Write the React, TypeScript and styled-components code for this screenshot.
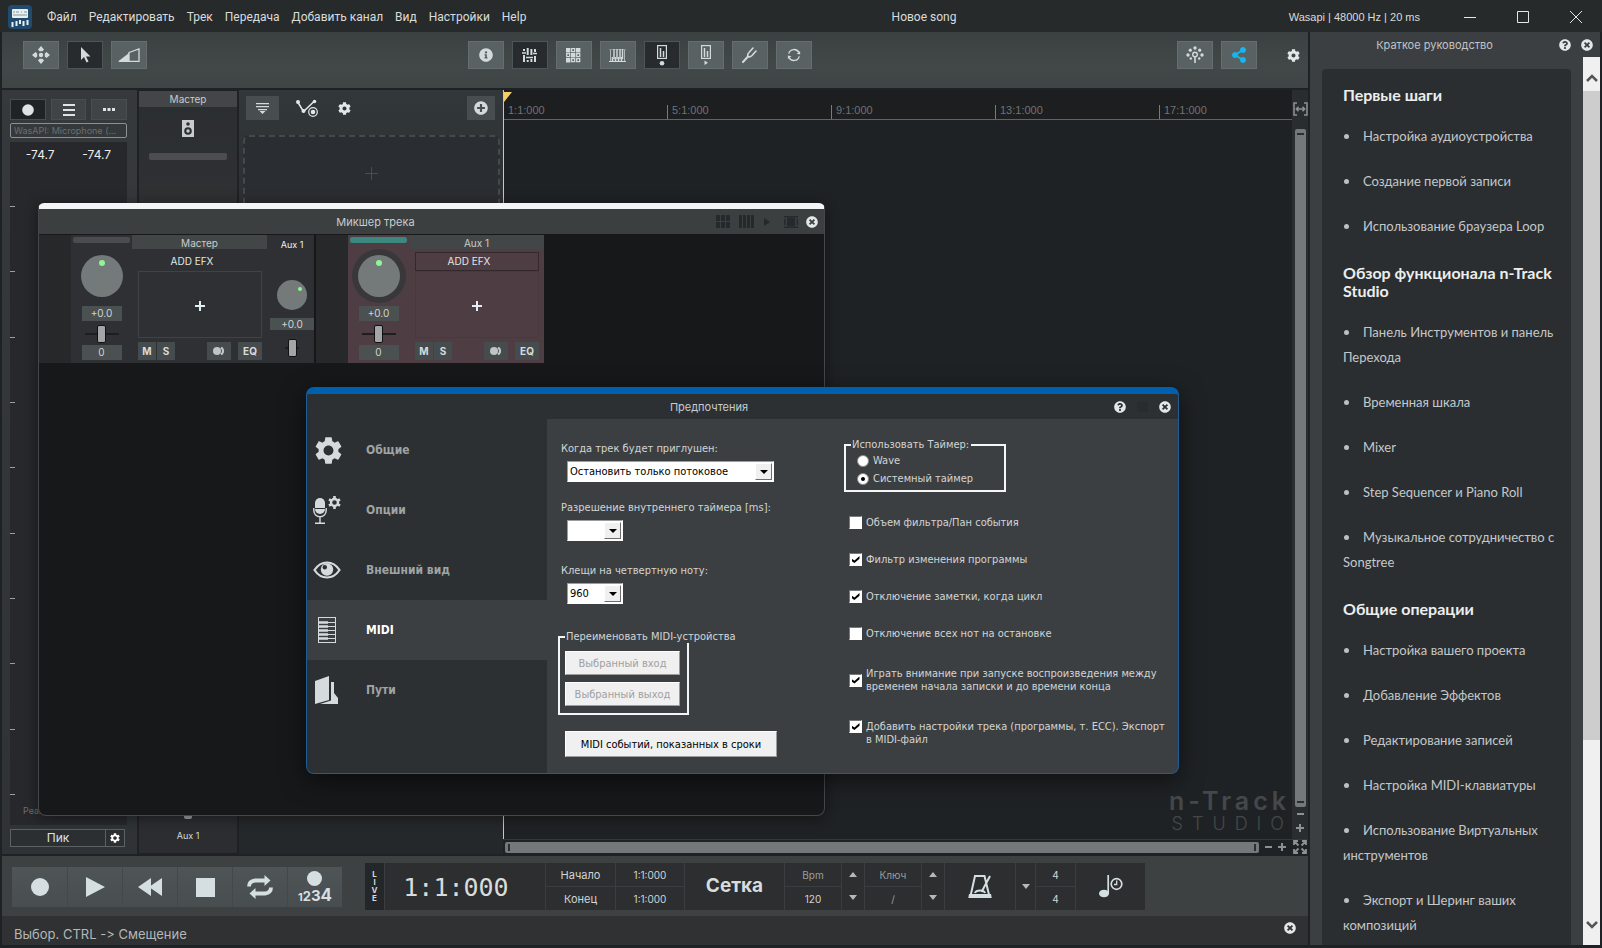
import React from 'react';
import styled, { createGlobalStyle, css } from 'styled-components';
import {
  FaCog, FaInfoCircle, FaQuestionCircle, FaTimesCircle, FaPlusCircle, FaShareAlt,
} from 'react-icons/fa';
import { MdSettings } from 'react-icons/md';

const ui = 'Roboto, "Noto Sans", sans-serif';
const geo = 'Inter, "Noto Sans", sans-serif';
const tahoma = '"DejaVu Sans Condensed", "DejaVu Sans", sans-serif';
const guideFont = 'Lato, Roboto, sans-serif';

const GlobalStyle = createGlobalStyle`
  *, *::before, *::after { box-sizing: border-box; }
  body { margin: 0; background: #1f2224; color: #d6dada; font: 11px/14px ${geo}; overflow: hidden; }
  button, input, select { font: inherit; color: inherit; margin: 0; padding: 0; border: 0; background: none; border-radius: 0; }
  svg { display: block; flex: none; }
  fieldset { margin: 0; min-width: 0; }
  h1, h2, h3, ul { margin: 0; padding: 0; font-weight: inherit; font-size: inherit; }
`;

const Window = styled.div`
  position: relative;
  display: flex;
  flex-direction: column;
  height: 100vh;
  padding: 0 2px 3px;
  background: #1f2224;
`;

/* ---------- title bar ---------- */
const TitleBar = styled.header`
  display: grid;
  grid-template-columns: 1.4fr auto 1fr;
  align-items: center;
  height: 32px;
  flex: none;
  padding: 1px 13px 0 6px;
  margin: 0 -2px;
  background: #262a2b;
  font: 12px/16px ${ui};
  color: #d9dcdc;
`;
const MenuBar = styled.nav`
  display: flex;
  align-items: center;
  gap: 12px;
  padding-left: 2px;
`;
const MenuButton = styled.button`
  white-space: nowrap;
`;
const LogoBox = styled.span`
  margin-right: 3px;
`;
const AppTitle = styled.h1``;
const TitleRight = styled.div`
  display: flex;
  align-items: center;
  justify-content: flex-end;
  font: 11px/16px "Liberation Sans", sans-serif;
`;
const AudioInfo = styled.span`
  margin-right: 37px;
`;
const WindowButton = styled.button`
  display: grid;
  place-items: center;
  width: 26px;
  height: 28px;
  & + & { margin-left: 27px; }
`;

/* ---------- frame ---------- */
const Columns = styled.div`
  display: flex;
  flex: 1;
  min-height: 0;
  gap: 2px;
`;
const Main = styled.main`
  display: flex;
  flex-direction: column;
  flex: 1;
  min-width: 0;
`;
const Toolbar = styled.div`
  display: grid;
  grid-template-columns: 0.91fr auto 1fr;
  align-items: start;
  height: 56px;
  flex: none;
  padding: 9px 8px 0 21px;
  background: linear-gradient(#3b4040, #424848 60%, #3f4444);
`;
const ToolGroup = styled.div<{ $end?: boolean }>`
  display: flex;
  align-items: center;
  gap: 8px;
  justify-content: ${(p) => (p.$end ? 'flex-end' : 'flex-start')};
`;
const ToolButton = styled.button<{ $active?: boolean }>`
  display: grid;
  place-items: center;
  width: 36px;
  height: 28px;
  color: #d3dadc;
  background: ${(p) => (p.$active ? '#272b2d' : '#5a6163')};
  border: 1px solid ${(p) => (p.$active ? '#4e5557' : '#666d6f')};
`;
const PlainButton = styled.button<{ $left?: number }>`
  display: grid;
  place-items: center;
  color: #e3e7e7;
  margin-left: ${(p) => p.$left ?? 0}px;
`;

/* ---------- workspace ---------- */
const Workspace = styled.div`
  display: flex;
  flex: 1;
  min-height: 0;
  margin: 2px 0;
  background: #1f2224;
`;
const InputPanel = styled.section`
  display: flex;
  flex-direction: column;
  width: 135px;
  flex: none;
  padding: 9px 10px 7px 8px;
  background: linear-gradient(#35393b, #2f3335);
`;
const ButtonRow = styled.div`
  display: flex;
  gap: 5px;
`;
const SmallButton = styled.button<{ $active?: boolean }>`
  display: grid;
  place-items: center;
  flex: 1;
  height: 21px;
  color: #dfe3e3;
  background: ${(p) => (p.$active ? '#202326' : '#404446')};
  border: 1px solid #484d4f;
`;
const DeviceName = styled.button`
  height: 15px;
  margin: 3px 0 4px;
  padding: 0 3px;
  border: 1px solid #8c9092;
  border-radius: 2px;
  color: #6b6f71;
  font-size: 9px;
  line-height: 12px;
  text-align: left;
  white-space: nowrap;
`;
const Meter = styled.div`
  display: flex;
  flex-direction: column;
  flex: 1;
  background: #26282b;
`;
const MeterValues = styled.div`
  display: flex;
  justify-content: space-around;
  padding: 5px 2px 0;
  height: 64px;
  font-size: 12px;
  line-height: 16px;
  color: #eceeee;
`;
const MeterTicks = styled.div`
  display: flex;
  flex-direction: column;
  justify-content: space-between;
  flex: 1;
  min-height: 0;
`;
const MeterTick = styled.i`
  width: 5px;
  height: 1px;
  background: #9a9e9f;
`;
const PeakLabel = styled.div`
  padding: 10px 0 8px 13px;
  font-size: 9px;
  line-height: 12px;
  color: #6b6f71;
`;
const PeakRow = styled.div`
  display: flex;
  height: 18px;
  margin: 4px 2px 0 0;
  border: 1px solid #5c6163;
  background: #2c2f31;
`;
const PeakButton = styled.button`
  flex: 1;
  font-size: 12px;
  line-height: 14px;
  color: #dfe3e3;
`;
const PeakGear = styled.button`
  display: grid;
  place-items: center;
  width: 19px;
  border-left: 1px solid #5c6163;
  color: #fff;
`;
const ChannelColumn = styled.section`
  display: flex;
  flex-direction: column;
  align-items: center;
  width: 98px;
  flex: none;
  margin: 1px 2px;
  background: linear-gradient(#2b2e30, #323336 30%, #2c2d31);
`;
const ChannelHeader = styled.h2`
  align-self: stretch;
  height: 16px;
  line-height: 17px;
  font-size: 10px;
  text-align: center;
  background: #434546;
  color: #c9cccc;
`;
const SpeakerButton = styled.button`
  margin: 13px 0 16px;
`;
const LevelBar = styled.div`
  width: 78px;
  height: 7px;
  border-radius: 2px;
  background: #4c4d50;
`;
const ChannelFoot = styled.div`
  display: flex;
  flex-direction: column;
  align-items: center;
  gap: 10px;
  margin-top: auto;
  padding-bottom: 10px;
  font-size: 9px;
`;
const FaderTip = styled.i`
  width: 8px;
  height: 8px;
  border-radius: 2px;
  background: #9fa2a3;
`;
const TrackPanel = styled.section`
  width: 264px;
  flex: none;
  display: flex;
  flex-direction: column;
  padding: 6px 3px 0 4px;
  background: linear-gradient(#32373a, #2a2e30 20%, #25282a);
`;
const TrackTools = styled.div`
  display: flex;
  align-items: center;
  padding: 0 5px 0 3px;
  color: #d3dadc;
`;
const TrackButton = styled.button<{ $w: number }>`
  display: grid;
  place-items: center;
  width: ${(p) => p.$w}px;
  height: 24px;
  background: #484d4f;
  color: #d3dadc;
`;
const Grow = styled.div`
  flex: 1;
`;
const DropZone = styled.div`
  display: grid;
  place-items: center;
  height: 74px;
  margin-top: 15px;
  border: 2px dashed #45494d;
  border-bottom: 0;
  border-radius: 6px 6px 0 0;
  background: #2a2d31;
  color: #4a4e52;
`;

/* ---------- timeline ---------- */
const Timeline = styled.section`
  display: flex;
  flex-direction: column;
  flex: 1;
  min-width: 0;
`;
const TimelineBody = styled.div`
  display: flex;
  flex: 1;
  min-height: 0;
`;
const Arrange = styled.div`
  display: flex;
  flex-direction: column;
  flex: 1;
  min-width: 0;
  border-left: 1px solid #f1c65c;
`;
const Ruler = styled.div`
  position: relative;
  display: flex;
  align-items: flex-end;
  height: 30px;
  flex: none;
  border-bottom: 1px solid #606466;
  background: #1c1e20;
  overflow: hidden;
`;
const RulerMark = styled.div<{ $first?: boolean }>`
  width: 164px;
  flex: none;
  height: 14px;
  padding-left: 4px;
  border-left: 1px solid ${(p) => (p.$first ? 'transparent' : '#777b7d')};
  margin-left: ${(p) => (p.$first ? -1 : 0)}px;
  font: 11px/10px "Liberation Sans", sans-serif;
  color: #6f7375;
`;
const PlayheadFlag = styled.i`
  position: absolute;
  left: 0;
  top: 2px;
  border-top: 10px solid #f5cf67;
  border-right: 8px solid transparent;
`;
const Logo = styled.div`
  display: flex;
  flex-direction: column;
  align-items: flex-end;
  margin-top: auto;
  padding: 0 4px 6px 0;
  color: #44484b;
`;
const LogoName = styled.div`
  font: 600 25px/28px ${geo};
  letter-spacing: 4px;
  margin-right: -2px;
`;
const LogoSub = styled.div`
  font: 300 18px/18px ${geo};
  letter-spacing: 9px;
  margin-right: -5px;
`;
const VStrip = styled.div`
  display: flex;
  flex-direction: column;
  align-items: center;
  width: 16px;
  flex: none;
  padding-top: 12px;
  background: #2a2d2f;
  color: #8d9193;
`;
const VThumb = styled.div`
  display: flex;
  flex-direction: column;
  justify-content: space-between;
  align-items: center;
  flex: 1;
  width: 11px;
  margin-top: 13px;
  padding: 4px 0;
  border-radius: 2px;
  background: #74787a;
  &::before, &::after { content: ''; width: 7px; height: 2px; background: #2c2f31; }
`;
const ZoomButton = styled.button`
  display: grid;
  place-items: center;
  width: 14px;
  height: 14px;
  color: #8d9193;
`;
const VZoom = styled.div`
  padding-bottom: 4px;
`;
const HStrip = styled.div`
  display: flex;
  align-items: center;
  height: 15px;
  flex: none;
  padding-left: 2px;
  background: #1f2224;
  border-top: 1px solid #34383a;
`;
const HThumb = styled.div`
  display: flex;
  justify-content: space-between;
  align-items: center;
  flex: 1;
  height: 11px;
  margin-right: 2px;
  padding: 0 3px;
  border-radius: 2px;
  background: #74787a;
  &::before, &::after { content: ''; width: 2px; height: 7px; background: #2c2f31; }
`;

/* ---------- transport ---------- */
const Transport = styled.section`
  display: flex;
  align-items: center;
  height: 60px;
  flex: none;
  padding: 0 10px;
  background: #3d4142;
`;
const TransportButtons = styled.div`
  display: flex;
  height: 40px;
  margin: 2px 23px 0 0;
  background: linear-gradient(#4f5557, #484e50);
`;
const TransportButton = styled.button`
  display: grid;
  place-items: center;
  width: 55px;
  color: #d5dfe2;
  & + & { border-left: 1px solid #434849; }
`;
const CountIn = styled.span`
  display: flex;
  flex-direction: column;
  align-items: center;
  gap: 2px;
  font: 700 14px/14px ${geo};
`;
const Digits = styled.span`
  display: flex;
  align-items: baseline;
`;
const Digit = styled.span<{ $size: number }>`
  font-size: ${(p) => p.$size}px;
`;
const Panel = styled.div`
  display: flex;
  height: 47px;
  background: #2c2e30;
`;
const Cell = styled.div<{ $w: number }>`
  display: flex;
  flex-direction: column;
  width: ${(p) => p.$w}px;
  border-right: 1px solid #3a3e40;
  &:last-child { border-right: 0; }
`;
const CellHalf = styled.div<{ $dim?: boolean; $size?: number }>`
  display: grid;
  place-items: center;
  flex: 1;
  padding-top: 2px;
  font-size: ${(p) => p.$size ?? 11}px;
  color: ${(p) => (p.$dim ? '#9a9e9f' : '#d2d5d5')};
  & + & { border-top: 1px solid #3a3e40; }
`;
const LiveButton = styled.button`
  display: flex;
  flex-direction: column;
  justify-content: center;
  align-items: center;
  flex: 1;
  font: 700 8px/8px ${geo};
  background: #242729;
`;
const Clock = styled.div`
  display: grid;
  place-items: center;
  flex: 1;
  padding: 3px 18px 0 0;
  font: 25px/28px "DejaVu Sans Mono", monospace;
  color: #d9dcdc;
`;
const GridButton = styled.button`
  flex: 1;
  font: 700 19px/24px ${geo};
  color: #d9dcdc;
`;
const CellButton = styled.button`
  display: grid;
  place-items: center;
  flex: 1;
  color: #d5dfe2;
`;
const Arrow = styled.i<{ $up?: boolean }>`
  border: 4px solid transparent;
  ${(p) => (p.$up
    ? css`border-top: 0; border-bottom: 5px solid #b4b8b9;`
    : css`border-bottom: 0; border-top: 5px solid #b4b8b9;`)}
`;
const StatusBar = styled.footer`
  display: flex;
  align-items: center;
  justify-content: space-between;
  height: 29px;
  flex: none;
  padding: 6px 12px 0 12px;
  background: #2f3132;
  font: 13px/18px ${geo};
  font-variant-ligatures: none;
  color: #b4b8b9;
`;

/* ---------- guide ---------- */
const Guide = styled.aside`
  display: flex;
  flex-direction: column;
  width: 290px;
  flex: none;
  background: #3c3f41;
`;
const GuideHeader = styled.div`
  display: grid;
  grid-template-columns: 1fr auto auto;
  align-items: center;
  gap: 10px;
  height: 25px;
  flex: none;
  padding: 0 7px 0 0;
  color: #e3e7e7;
`;
const GuideTitle = styled.h2`
  padding-left: 10px;
  text-align: center;
  color: #c0c4c4;
`;
const GuideBody = styled.div`
  display: flex;
  flex: 1;
  min-height: 0;
`;
const GuideCard = styled.div`
  flex: 1;
  min-width: 0;
  margin: 12px 12px 0;
  padding: 17px 14px 0 21px;
  border-radius: 4px 4px 0 0;
  background: #2b2e31;
  overflow: hidden;
  font-family: ${guideFont};
`;
const GuideHeading = styled.h3`
  font-size: 16px;
  line-height: 18px;
  font-weight: 700;
  color: #eceeee;
`;
const GuideList = styled.ul`
  display: flex;
  flex-direction: column;
  gap: 20px;
  padding: 20px 0 25px;
  list-style: none;
`;
const GuideItem = styled.li`
  font-size: 13px;
  line-height: 25px;
  color: #c4c8c9;
  &::before { content: ''; display: inline-block; width: 5px; height: 5px; margin: 0 14px 2px 1px; border-radius: 50%; background: #bcc0c1; }
`;
const GuideLink = styled.a`
  color: inherit;
  text-decoration: none;
`;
const GuideScroll = styled.div`
  display: flex;
  flex-direction: column;
  align-items: center;
  width: 17px;
  background: #f0f0f0;
  color: #555;
`;
const ScrollArrow = styled.button<{ $h: number }>`
  display: grid;
  place-items: center;
  width: 17px;
  height: ${(p) => p.$h}px;
  padding-top: 8px;
  color: #555;
`;
const ScrollThumb = styled.div`
  width: 17px;
  flex: 650;
  background: #cdcdcd;
`;
const ScrollRest = styled.div`
  flex: 157;
`;

/* ---------- mixer window ---------- */
const MixerWindow = styled.section`
  position: absolute;
  left: 38px;
  top: 203px;
  width: 787px;
  height: 613px;
  display: flex;
  flex-direction: column;
  border: 1px solid #44484a;
  border-top: 6px solid #f4f6f6;
  border-radius: 6px 6px 8px 8px;
  background: #17181a;
  box-shadow: 0 2px 14px rgba(0, 0, 0, 0.45);
  overflow: hidden;
`;
const MixerHeader = styled.div`
  display: flex;
  align-items: center;
  height: 26px;
  padding: 0 6px 0 0;
  flex: none;
  border-bottom: 1px solid #17181a;
  background: #3b3f40;
  color: #26292b;
`;
const FloatTitle = styled.h2`
  flex: 1;
  text-align: center;
  color: #c9cccc;
`;
const MixerTitle = styled(FloatTitle)`
  padding-right: 4px;
`;
const Strips = styled.div`
  display: flex;
  gap: 1px;
`;
const Strip = styled.div<{ $tint?: boolean }>`
  display: flex;
  height: 128px;
  background: ${(p) => (p.$tint ? '#4e3d43' : '#2e3033')};
`;
const StripGutter = styled.div`
  width: 32px;
  background: #26282a;
`;
const KnobColumn = styled.div`
  display: flex;
  flex-direction: column;
  align-items: center;
  width: 61px;
  padding-top: 2px;
`;
const StripBar = styled.div<{ $teal?: boolean }>`
  width: 57px;
  height: 6px;
  margin-bottom: 12px;
  border-radius: 2px;
  background: ${(p) => (p.$teal ? '#3a8880' : '#4a4c4e')};
`;
const KnobRing = styled.div<{ $ring?: boolean }>`
  border-radius: 50%;
  box-shadow: ${(p) => (p.$ring ? '0 0 0 6px #38383b' : 'none')};
`;
const ValueBox = styled.output<{ $w: number; $h: number }>`
  display: block;
  width: ${(p) => p.$w}px;
  height: ${(p) => p.$h}px;
  line-height: ${(p) => p.$h}px;
  text-align: center;
  background: #4b5051;
  color: #d2d5d5;
  font-size: 10px;
`;
const PanSliderRow = styled.div`
  display: flex;
  padding: 4px 0 2px;
`;
const PanSlider = styled.input<{ $w: number }>`
  appearance: none;
  width: ${(p) => p.$w}px;
  height: 18px;
  background: linear-gradient(#1c1e20, #1c1e20) center / 100% 2px no-repeat;
  &::-webkit-slider-thumb {
    appearance: none;
    width: 9px;
    height: 18px;
    border: 1px solid #111;
    border-radius: 2px;
    background: #a3a6a7;
  }
`;
const KnobStack = styled.div`
  display: flex;
  flex-direction: column;
  align-items: center;
  padding-top: 9px;
`;
const EfxColumn = styled.div`
  display: flex;
  flex-direction: column;
  width: 135px;
`;
const EfxHeader = styled.h3`
  height: 14px;
  line-height: 16px;
  font-size: 10px;
  text-align: center;
  background: #434647;
  color: #c9cccc;
`;
const EfxBody = styled.div`
  display: flex;
  flex-direction: column;
  padding: 3px 5px 0 6px;
`;
const AddEfx = styled.button<{ $tint?: boolean }>`
  height: 19px;
  padding: 0 16px 2px 0;
  border: 1px solid ${(p) => (p.$tint ? '#33292d' : 'transparent')};
  color: #e3e7e7;
  font-size: 10px;
`;
const SlotButton = styled.button<{ $tint?: boolean }>`
  display: grid;
  place-items: center;
  height: 67px;
  padding-top: 2px;
  border: 1px solid ${(p) => (p.$tint ? '#49383e' : '#404345')};
  color: #dfeff3;
`;
const StripButtons = styled.div`
  display: flex;
  gap: 1px;
  margin-top: 4px;
`;
const StripButton = styled.button<{ $w: number; $left?: number }>`
  display: grid;
  place-items: center;
  width: ${(p) => p.$w}px;
  height: 18px;
  margin-left: ${(p) => p.$left ?? 0}px;
  background: #464b4d;
  color: #d9dcdc;
  font-weight: 700;
  font-size: 10px;
`;
const AuxColumn = styled.div`
  display: flex;
  flex-direction: column;
  align-items: center;
  width: 48px;
  padding: 3px 0 0 3px;
  border-right: 1px solid #141516;
`;
const AuxLabel = styled.div`
  margin-bottom: 28px;
  font-size: 9px;
  color: #f0f2f2;
`;
const AuxValue = styled(ValueBox)`
  margin: 8px 0 9px;
`;
const HeaderIcons = styled.div`
  display: flex;
  align-items: center;
  gap: 8px;
`;

/* ---------- preferences window ---------- */
const PrefsWindow = styled.section`
  position: absolute;
  left: 306px;
  top: 387px;
  width: 873px;
  height: 387px;
  display: flex;
  flex-direction: column;
  border: 1px solid #1d5e99;
  border-top: 7px solid #0060b0;
  border-radius: 8px;
  background: #3c3f41;
  box-shadow: 0 6px 24px rgba(0, 0, 0, 0.55);
  overflow: hidden;
`;
const PrefsHeader = styled.div`
  display: flex;
  align-items: center;
  gap: 11px;
  height: 25px;
  flex: none;
  padding: 0 7px 0 0;
  background: #2c3033;
  color: #282c2f;
`;
const PrefsTitle = styled(FloatTitle)`
  padding-left: 8px;
`;
const PrefsBody = styled.div`
  display: flex;
  flex: 1;
  font: 11px/13px ${tahoma};
  color: #d2d5d5;
`;
const SideNav = styled.nav`
  width: 240px;
  padding-top: 1px;
  background: #2c3033;
`;
const SideItem = styled.button<{ $active?: boolean }>`
  display: flex;
  align-items: center;
  width: 100%;
  height: 60px;
  padding-left: 5px;
  background: ${(p) => (p.$active ? '#3c3f41' : 'transparent')};
  color: ${(p) => (p.$active ? '#fff' : '#9fa3a4')};
  font-weight: 700;
  font-size: 12px;
`;
const SideIcon = styled.span`
  display: grid;
  place-items: center;
  width: 30px;
  margin-right: 24px;
  color: #d5dadd;
`;
const Form = styled.form`
  display: flex;
  flex: 1;
  align-items: flex-start;
`;
const FormColumn = styled.div<{ $w: number; $top: number }>`
  display: flex;
  flex-direction: column;
  align-items: flex-start;
  width: ${(p) => p.$w}px;
  padding-top: ${(p) => p.$top}px;
`;
const Field = styled.div<{ $gap: number }>`
  display: flex;
  flex-direction: column;
  gap: 6px;
  padding-left: 14px;
  margin-bottom: ${(p) => p.$gap}px;
`;
const FieldLabel = styled.label`
  white-space: nowrap;
`;
const SelectBox = styled.div<{ $w: number }>`
  position: relative;
  width: ${(p) => p.$w}px;
  height: 21px;
  margin-left: 6px;
`;
const Select = styled.select`
  appearance: none;
  width: 100%;
  height: 100%;
  padding: 0 20px 0 2px;
  border: 1px solid;
  border-color: #9a9c9d #fff #fff #9a9c9d;
  background: #fff;
  color: #000;
`;
const SelectArrow = styled.span`
  position: absolute;
  top: 2px;
  right: 2px;
  bottom: 2px;
  display: grid;
  place-items: center;
  width: 17px;
  border: 1px solid;
  border-color: #fff #6d6d6d #6d6d6d #fff;
  background: #f0f0f0;
  pointer-events: none;
  &::after { content: ''; border: 4px solid transparent; border-top-color: #000; border-bottom: 0; }
`;
const Group = styled.fieldset<{ $w: number }>`
  display: flex;
  flex-direction: column;
  width: ${(p) => p.$w}px;
  padding: 0 5px;
  border: 2px solid #f4f6f6;
  & > legend { padding: 0 2px 0 1px; white-space: nowrap; }
`;
const DeviceGroup = styled(Group)`
  margin-left: 11px;
`;
const GroupBody = styled.div<{ $gap: number; $pad: string }>`
  display: flex;
  flex-direction: column;
  gap: ${(p) => p.$gap}px;
  padding: ${(p) => p.$pad};
`;
const ClassicButton = styled.button<{ $w: number; $h: number }>`
  width: ${(p) => p.$w}px;
  height: ${(p) => p.$h}px;
  border: 1px solid;
  border-color: #fff #9a9c9d #9a9c9d #fff;
  background: #f0f0f0;
  color: #000;
  white-space: nowrap;
  &:disabled { color: #a0a0a0; }
`;
const WideButtonRow = styled.div`
  padding: 16px 0 0 18px;
`;
const Choice = styled.label<{ $first?: boolean; $top?: number }>`
  display: flex;
  align-items: ${(p) => (p.$first ? 'flex-start' : 'center')};
  gap: 4px;
  padding-top: ${(p) => p.$top ?? 0}px;
`;
const Radio = styled.input`
  appearance: none;
  display: grid;
  place-items: center;
  width: 12px;
  height: 12px;
  border: 1px solid #8a8c8d;
  border-radius: 50%;
  background: #fff;
  &:checked::after { content: ''; width: 4px; height: 4px; border-radius: 50%; background: #000; }
`;
const Check = styled.input`
  appearance: none;
  display: grid;
  place-items: center;
  flex: none;
  width: 13px;
  height: 13px;
  border: 1px solid;
  border-color: #77797a #fff #fff #77797a;
  background: #fff;
  &:checked::after {
    content: '';
    width: 8px;
    height: 7px;
    background: #000;
    clip-path: polygon(0 35%, 37% 65%, 100% 0, 100% 40%, 37% 100%, 0 70%);
  }
`;
const CheckList = styled.div`
  display: flex;
  flex-direction: column;
  gap: 24px;
  padding: 24px 0 0 5px;
`;
const OptionText = styled.span`
  white-space: pre;
`;
const FullButton = styled(ZoomButton)`
  width: 16px;
  margin-left: 3px;
`;
const StatusClose = styled(PlainButton)`
  margin-bottom: 12px;
`;

/* ---------- drawings ---------- */
const AppLogo = () => (
  <svg width="24" height="24" viewBox="0 0 24 24">
    <rect width="24" height="24" rx="4" fill="#1f4c6e" />
    <rect x="4" y="4" width="16" height="9" rx="1" fill="#e9eef0" />
    <path d="M5 7h2m1 0h3m2 0h1m2 0h3M5 10h14" stroke="#8a9499" strokeWidth="1" />
    <path d="M4.500 17v5M8.500 16v5M12 15v4M15.500 16v5M19.500 15v5" stroke="#e9eef0" strokeWidth="2" />
  </svg>
);
const MoveIcon = () => (
  <svg width="18" height="18" viewBox="0 0 18 18" fill="currentColor">
    <path d="M9 0l3 3.500-1.500 1.700h-3L6 3.500zM9 18l3-3.500-1.500-1.700h-3L6 14.500zM0 9l3.500-3 1.700 1.500v3L3.500 12zM18 9l-3.500-3-1.700 1.500v3l1.700 1.500z" />
    <circle cx="9" cy="9" r="2.200" />
  </svg>
);
const CursorIcon = () => (
  <svg width="11" height="16" viewBox="0 0 11 16" fill="currentColor">
    <path d="M1 0v13l3-3 2.500 5.500 2-1L6 9.500h4.500z" />
  </svg>
);
const FadeIcon = () => (
  <svg width="22" height="14" viewBox="0 0 22 14" fill="none" stroke="currentColor">
    <path d="M0 13.500L11 5v8.500z" fill="currentColor" stroke="none" />
    <path d="M11 4.500L21 1v12.500H1M11 4v9" strokeWidth="1.300" />
  </svg>
);
const MixerIcon = () => (
  <svg width="15" height="14" viewBox="0 0 15 14" stroke="currentColor" strokeWidth="2">
    <path d="M2 1v2M2 7v7M5.700 0v7M5.700 12v2M9.400 1v6M9.400 11v3M13 1v3M13 8v6" />
    <path d="M0 5h4M4 9.500h4M8 9.500h3M11 5.500h4" strokeWidth="1.600" />
  </svg>
);
const StepIcon = () => (
  <svg width="15" height="15" viewBox="0 0 15 15" fill="none" stroke="currentColor" strokeWidth="1.300">
    <path d="M.7 5.700h3v3h-3zM5.700.7h3v3h-3zM10.700 5.700h3v3h-3zM10.700 10.700h3v3h-3zM5.700 10.700h3v3h-3z" />
    <path d="M0 0h4.400v4.400H0zM10 0h4.400v4.400H10zM5 5h4.400v4.400H5zM0 10h4.400v4.400H0z" fill="currentColor" stroke="none" />
  </svg>
);
const PianoIcon = () => (
  <svg width="17" height="13" viewBox="0 0 17 13" stroke="currentColor">
    <path d="M0 12.500h17" />
    <path d="M1.500 1v11M15.500 1v11" opacity=".7" />
    <path d="M5 0v10M8 0v10M11 0v10M13.500 0v10" strokeWidth="1.400" />
    <path d="M3.500 8v4M6.500 8v4M9.500 8v4M12.500 8v4" strokeWidth="1.600" />
    <path d="M0 .5h17" opacity=".4" />
  </svg>
);
const MeterIcon = ({ play }: { play?: boolean }) => (
  <svg width="10" height="21" viewBox="0 0 10 21" fill="none" stroke="currentColor">
    <rect x=".6" y=".6" width="8.800" height="12.800" strokeWidth="1.200" />
    <path d="M3.500 3v9M6.500 6v6" strokeWidth="1.500" />
    {play ? <path d="M3.500 15.500l3.500 2.200-3.500 2.300z" fill="currentColor" stroke="none" />
      : <circle cx="5" cy="18.200" r="2.300" fill="currentColor" stroke="none" />}
  </svg>
);
const ForkIcon = () => (
  <svg width="15" height="16" viewBox="0 0 15 16" fill="none" stroke="currentColor" strokeWidth="1.600" strokeLinecap="round">
    <path d="M1 15l5-5.500" strokeWidth="2" />
    <path d="M6 9.500c-1-2 0-3 1-4L11 1M6 9.500c2 1 3 0 4-1L14 4" />
  </svg>
);
const SyncIcon = () => (
  <svg width="14" height="14" viewBox="0 0 16 16" fill="none" stroke="currentColor" strokeWidth="1.500">
    <path d="M2 6.500A6.200 6.200 0 0 1 13.500 5M14 9.500A6.200 6.200 0 0 1 2.500 11" />
    <path d="M15 3.500V7.500l-4-1zM1 12.500V8.500l4 1z" fill="currentColor" stroke="none" />
  </svg>
);
const TreeIcon = () => (
  <svg width="18" height="18" viewBox="0 0 18 18" fill="currentColor">
    <circle cx="9" cy="8.500" r="2.300" fill="none" stroke="currentColor" strokeWidth="1.400" />
    <path d="M8.200 11h1.600v6H8.200z" />
    <circle cx="9" cy="2" r="1.700" /><circle cx="4.300" cy="4.200" r="1.600" /><circle cx="13.700" cy="4.200" r="1.600" />
    <circle cx="2" cy="9" r="1.700" /><circle cx="16" cy="9" r="1.700" />
    <circle cx="4.800" cy="12.500" r="1.200" /><circle cx="13.200" cy="12.500" r="1.200" />
  </svg>
);
const SpeakerIcon = () => (
  <svg width="12" height="17" viewBox="0 0 12 17">
    <rect width="12" height="17" fill="#c7cbcc" />
    <circle cx="6" cy="4" r="1.800" fill="#2b2e30" />
    <circle cx="6" cy="11" r="3.800" fill="#2b2e30" />
    <circle cx="6" cy="11" r="1.700" fill="#c7cbcc" />
  </svg>
);
const ListDownIcon = () => (
  <svg width="13" height="11" viewBox="0 0 13 11" fill="currentColor">
    <path d="M0 0h13v1.300H0zM0 3h13v1.300H0zM2 6h9v1.300H2zM3.500 8h6l-3 3z" />
  </svg>
);
const EnvelopeIcon = () => (
  <svg width="23" height="18" viewBox="0 0 23 18" fill="none" stroke="currentColor">
    <path d="M2 3.500l5.500 9L18 2.500" strokeWidth="1.500" />
    <g fill="currentColor" stroke="none">
      <circle cx="2" cy="3" r="2" /><circle cx="7.500" cy="12" r="2" /><circle cx="18.500" cy="2.500" r="1.800" /><circle cx="17" cy="13" r="2.300" />
    </g>
    <circle cx="17" cy="13" r="4.300" strokeWidth="1.200" />
  </svg>
);
const Plus = ({ size, w = 1 }: { size: number; w?: number }) => (
  <svg width={size} height={size} viewBox={`0 0 ${size} ${size}`} stroke="currentColor" strokeWidth={w}>
    <path d={`M${size / 2} 0v${size}M0 ${size / 2}h${size}`} />
  </svg>
);
const Minus = () => (
  <svg width="7" height="2" viewBox="0 0 7 2" fill="currentColor"><path d="M0 0h7v2H0z" /></svg>
);
const FitIcon = () => (
  <svg width="15" height="14" viewBox="0 0 15 14" fill="none" stroke="currentColor" strokeWidth="1.500">
    <path d="M4 1H1v12h3M11 1h3v12h-3M3.500 7h8M5.500 4.800L3.300 7l2.200 2.200M9.500 4.800L11.700 7 9.500 9.200" />
  </svg>
);
const ExpandIcon = () => (
  <svg width="14" height="14" viewBox="0 0 14 14" fill="none" stroke="currentColor" strokeWidth="1.800">
    <path d="M5 1H1v4M9 1h4v4M5 13H1V9M9 13h4V9M1.500 1.500L5.500 5.500M12.500 1.500l-4 4M1.500 12.500l4-4M12.500 12.500l-4-4" />
  </svg>
);
const LoopIcon = () => (
  <svg width="26" height="26" viewBox="0 0 26 26" fill="none" stroke="currentColor" strokeWidth="3.800">
    <path d="M2 12.500C2 9 4.500 7 8 6.500H18M24 13.500c0 3.500-2.500 5.500-6 6H8" />
    <path d="M17.500 1l6 5.500-6 5.500zM8.500 14l-6 5.500 6 5.500z" fill="currentColor" stroke="none" />
  </svg>
);
const MetronomeIcon = () => (
  <svg width="24" height="25" viewBox="0 0 24 25" fill="none" stroke="currentColor" strokeWidth="2">
    <path d="M2.500 22L7 2h9.500l4.800 20M22 2l-8.500 16M7 19c1-3.500 9-3.500 10 0" />
    <path d="M1 20h22l.7 4H.3z" fill="currentColor" stroke="none" />
  </svg>
);
const NoteClockIcon = () => (
  <svg width="24" height="23" viewBox="0 0 24 23" fill="none" stroke="currentColor">
    <ellipse cx="5" cy="18.500" rx="5" ry="3.800" fill="currentColor" stroke="none" />
    <path d="M9.200 0v19" strokeWidth="1.700" />
    <circle cx="17.500" cy="9" r="5.300" strokeWidth="1.700" />
    <path d="M17.700 5.500V9.500H15" strokeWidth="1.300" />
  </svg>
);
const MicIcon = () => (
  <svg width="28" height="28" viewBox="0 0 28 28" fill="none" stroke="currentColor">
    <rect x="2" y="2" width="10" height="16" rx="5" fill="currentColor" stroke="none" />
    <path d="M.8 12v2.500a6.200 6.200 0 0 0 12.400 0V12M7 21v6M2 27.200h10" strokeWidth="1.400" />
    <path d="M2 12.500h10" stroke="#2c3033" />
    <circle cx="21.500" cy="6.500" r="3.500" strokeWidth="2.400" />
    <path d="M21.500 0v3M21.500 10v3M16 3.300l2.500 1.500M24.500 8.200l2.500 1.500M16 9.700l2.500-1.500M24.500 4.800L27 3.300" strokeWidth="2.600" />
  </svg>
);
const EyeIcon = () => (
  <svg width="28" height="18" viewBox="0 0 28 18">
    <path d="M1.500 9C8-1 20-1 26.500 9 20 19 8 19 1.500 9z" fill="none" stroke="currentColor" strokeWidth="2.200" />
    <circle cx="14" cy="8.500" r="6.200" fill="currentColor" />
    <circle cx="11.800" cy="6.200" r="2.200" fill="#2c3033" />
  </svg>
);
const KeysIcon = () => (
  <svg width="18" height="26" viewBox="0 0 18 26" stroke="currentColor" fill="none">
    <rect x=".5" y=".5" width="17" height="25" />
    <path d="M1 5.500h16M1 9.500h16M1 13.500h16M1 17.500h16M1 21.500h16" strokeWidth="1" />
    <path d="M1 5.500h9M1 9.500h9M1 13.500h9M1 17.500h9M1 21.500h9" strokeWidth="2.600" />
  </svg>
);
const FolderIcon = () => (
  <svg width="24" height="28" viewBox="0 0 24 28" fill="currentColor">
    <path d="M0 5L14 0v24L0 28z" />
    <path d="M16 6h3v11l4 5v6H5l11-3.500z" />
  </svg>
);
const Knob = ({ r, dot }: { r: number; dot: [number, number, number] }) => (
  <svg width={r * 2} height={r * 2} viewBox={`0 0 ${r * 2} ${r * 2}`}>
    <circle cx={r} cy={r} r={r} fill="#747979" />
    <circle cx={dot[0]} cy={dot[1]} r={dot[2]} fill="#8ff596" />
  </svg>
);
const PhaseIcon = () => (
  <svg width="12" height="8" viewBox="0 0 12 8">
    <circle cx="4" cy="4" r="4" fill="#c0c4c4" />
    <path d="M8 .5a4 4 0 0 1 0 7" fill="none" stroke="#c0c4c4" strokeWidth="2.200" />
  </svg>
);
const Chevron = ({ up }: { up?: boolean }) => (
  <svg width="12" height="8" viewBox="0 0 12 8" fill="none" stroke="currentColor" strokeWidth="2.500">
    <path d={up ? 'M1 7l5-5 5 5' : 'M1 1l5 5 5-5'} />
  </svg>
);
const FrameIcon = () => (
  <svg width="14" height="12" viewBox="0 0 14 12" fill="currentColor">
    <path d="M0 0h14v1.500H0zM0 10.500h14V12H0zM0 3h1.500v6H0zM12.500 3H14v6h-1.500zM3 2h8v8H3z" />
  </svg>
);

const menus = ['Файл', 'Редактировать', 'Трек', 'Передача', 'Добавить канал', 'Вид', 'Настройки', 'Help'];
const marks = ['1:1:000', '5:1:000', '9:1:000', '13:1:000', '17:1:000'];
const guide = [
  { title: 'Первые шаги', items: ['Настройка аудиоустройства', 'Создание первой записи', 'Использование браузера Loop'] },
  { title: 'Обзор функционала n-Track Studio', items: ['Панель Инструментов и панель Перехода', 'Временная шкала', 'Mixer', 'Step Sequencer и Piano Roll', 'Музыкальное сотрудничество с Songtree'] },
  { title: 'Общие операции', items: ['Настройка вашего проекта', 'Добавление Эффектов', 'Редактирование записей', 'Настройка MIDI-клавиатуры', 'Использование Виртуальных инструментов', 'Экспорт и Шеринг ваших композиций'] },
];
const sections = [
  { label: 'Общие', icon: <MdSettings size={33} /> },
  { label: 'Опции', icon: <MicIcon /> },
  { label: 'Внешний вид', icon: <EyeIcon /> },
  { label: 'MIDI', icon: <KeysIcon />, active: true },
  { label: 'Пути', icon: <FolderIcon /> },
];
const options: { text: string; on?: boolean; first?: boolean; top?: number }[] = [
  { text: 'Объем фильтра/Пан события' },
  { text: 'Фильтр изменения программы', on: true },
  { text: 'Отключение заметки, когда цикл', on: true },
  { text: 'Отключение всех нот на остановке' },
  { text: 'Играть внимание при запуске воспроизведения между\nвременем начала записки и до времени конца', on: true, top: 3 },
  { text: 'Добавить настройки трека (программы, т. ЕСС). Экспорт\nв MIDI-файл', on: true, first: true, top: 3 },
];

const ChannelStrip = ({ name, tint, aux }: { name: string; tint?: boolean; aux?: boolean }) => (
  <Strip $tint={tint}>
    <StripGutter />
    <KnobColumn>
      <StripBar $teal={tint} />
      <KnobRing $ring={tint}><Knob r={21} dot={[21, 8, 3]} /></KnobRing>
      <KnobStack>
        <ValueBox $w={40} $h={15}>+0.0</ValueBox>
        <PanSliderRow><PanSlider type="range" $w={34} aria-label={`${name} pan`} /></PanSliderRow>
        <ValueBox $w={40} $h={15}>0</ValueBox>
      </KnobStack>
    </KnobColumn>
    <EfxColumn>
      <EfxHeader>{name}</EfxHeader>
      <EfxBody>
        <AddEfx $tint={tint}>ADD EFX</AddEfx>
        <SlotButton $tint={tint} aria-label="Add effect"><Plus size={10} w={2} /></SlotButton>
        <StripButtons>
          <StripButton $w={18}>M</StripButton>
          <StripButton $w={18}>S</StripButton>
          <StripButton $w={24} $left={31} aria-label="Phase"><PhaseIcon /></StripButton>
          <StripButton $w={24} $left={6}>EQ</StripButton>
        </StripButtons>
      </EfxBody>
    </EfxColumn>
    {aux && (
      <AuxColumn>
        <AuxLabel>Aux 1</AuxLabel>
        <Knob r={15} dot={[23, 9, 2]} />
        <AuxValue $w={44} $h={12}>+0.0</AuxValue>
        <PanSlider type="range" $w={14} aria-label="Aux 1 pan" />
      </AuxColumn>
    )}
  </Strip>
);

const Mixer = () => (
  <MixerWindow>
    <MixerHeader>
      <MixerTitle>Микшер трека</MixerTitle>
      <HeaderIcons>
        <svg width="15" height="13" viewBox="0 0 15 13" fill="currentColor"><path d="M0 0h4v6H0zM5 0h4v6H5zM10 0h4v6h-4zM0 7h4v6H0zM5 7h4v6H5zM10 7h4v6h-4z" /></svg>
        <svg width="15" height="13" viewBox="0 0 15 13" fill="currentColor"><path d="M0 0h3v13H0zM4 0h3v13H4zM8 0h3v13H8zM12 0h3v13h-3z" /></svg>
        <svg width="14" height="10" viewBox="0 0 14 10" fill="currentColor"><path d="M2 1l6 4-6 4z" /></svg>
        <FrameIcon />
        <PlainButton aria-label="Close mixer"><FaTimesCircle size={12} /></PlainButton>
      </HeaderIcons>
    </MixerHeader>
    <Strips>
      <ChannelStrip name="Мастер" aux />
      <ChannelStrip name="Aux 1" tint />
    </Strips>
  </MixerWindow>
);

const Preferences = () => (
  <PrefsWindow>
    <PrefsHeader>
      <PrefsTitle>Предпочтения</PrefsTitle>
      <PlainButton aria-label="Help"><FaQuestionCircle size={12} /></PlainButton>
      <svg width="11" height="10" viewBox="0 0 11 10" fill="currentColor"><path d="M0 0h11v10H0z" /></svg>
      <PlainButton aria-label="Close preferences"><FaTimesCircle size={12} /></PlainButton>
    </PrefsHeader>
    <PrefsBody>
      <SideNav>
        {sections.map((s) => (
          <SideItem key={s.label} $active={s.active}><SideIcon>{s.icon}</SideIcon>{s.label}</SideItem>
        ))}
      </SideNav>
      <Form onSubmit={(e) => e.preventDefault()}>
        <FormColumn $w={297} $top={23}>
          <Field $gap={19}>
            <FieldLabel htmlFor="mute">Когда трек будет приглушен:</FieldLabel>
            <SelectBox $w={207}>
              <Select id="mute"><option>Остановить только потоковое</option></Select>
              <SelectArrow />
            </SelectBox>
          </Field>
          <Field $gap={23}>
            <FieldLabel htmlFor="timer">Разрешение внутреннего таймера [ms]:</FieldLabel>
            <SelectBox $w={56}>
              <Select id="timer"><option></option></Select>
              <SelectArrow />
            </SelectBox>
          </Field>
          <Field $gap={26}>
            <FieldLabel htmlFor="ticks">Клещи на четвертную ноту:</FieldLabel>
            <SelectBox $w={56}>
              <Select id="ticks"><option>960</option></Select>
              <SelectArrow />
            </SelectBox>
          </Field>
          <DeviceGroup $w={131}>
            <legend>Переименовать MIDI-устройства</legend>
            <GroupBody $gap={7} $pad="8px 0 7px">
              <ClassicButton $w={115} $h={24} disabled>Выбранный вход</ClassicButton>
              <ClassicButton $w={115} $h={24} disabled>Выбранный выход</ClassicButton>
            </GroupBody>
          </DeviceGroup>
          <WideButtonRow>
            <ClassicButton $w={212} $h={26}>MIDI событий, показанных в сроки</ClassicButton>
          </WideButtonRow>
        </FormColumn>
        <FormColumn $w={320} $top={19}>
          <Group $w={162}>
            <legend>Использовать Таймер:</legend>
            <GroupBody $gap={5} $pad="3px 0 5px 6px">
              <Choice><Radio type="radio" name="clock" />Wave</Choice>
              <Choice><Radio type="radio" name="clock" defaultChecked />Системный таймер</Choice>
            </GroupBody>
          </Group>
          <CheckList>
            {options.map((o) => (
              <Choice key={o.text} $first={o.first} $top={o.top}>
                <Check type="checkbox" defaultChecked={o.on} />
                <OptionText>{o.text}</OptionText>
              </Choice>
            ))}
          </CheckList>
        </FormColumn>
      </Form>
    </PrefsBody>
  </PrefsWindow>
);

const Stepper = ({ name }: { name: string }) => (
  <Cell $w={23}>
    <CellButton aria-label={`${name} up`}><Arrow $up /></CellButton>
    <CellButton aria-label={`${name} down`}><Arrow /></CellButton>
  </Cell>
);

export default function App() {
  return (
    <Window>
      <GlobalStyle />
      <TitleBar>
        <MenuBar>
          <LogoBox><AppLogo /></LogoBox>
          {menus.map((m) => <MenuButton key={m}>{m}</MenuButton>)}
        </MenuBar>
        <AppTitle>Новое song</AppTitle>
        <TitleRight>
          <AudioInfo>Wasapi | 48000 Hz | 20 ms</AudioInfo>
          <WindowButton aria-label="Minimize"><svg width="12" height="12" stroke="#e3e7e7"><path d="M0 6.500h12" /></svg></WindowButton>
          <WindowButton aria-label="Maximize"><svg width="12" height="12" stroke="#e3e7e7" fill="none"><path d="M.5.500h11v11H.5z" /></svg></WindowButton>
          <WindowButton aria-label="Close"><svg width="12" height="12" stroke="#e3e7e7"><path d="M0 0l12 12M12 0L0 12" /></svg></WindowButton>
        </TitleRight>
      </TitleBar>
      <Columns>
        <Main>
          <Toolbar>
            <ToolGroup>
              <ToolButton aria-label="Move"><MoveIcon /></ToolButton>
              <ToolButton $active aria-label="Select"><CursorIcon /></ToolButton>
              <ToolButton aria-label="Fade"><FadeIcon /></ToolButton>
            </ToolGroup>
            <ToolGroup>
              <ToolButton aria-label="Info"><FaInfoCircle size={14} /></ToolButton>
              <ToolButton $active aria-label="Mixer"><MixerIcon /></ToolButton>
              <ToolButton aria-label="Step sequencer"><StepIcon /></ToolButton>
              <ToolButton aria-label="Piano"><PianoIcon /></ToolButton>
              <ToolButton $active aria-label="Input meter"><MeterIcon /></ToolButton>
              <ToolButton aria-label="Output meter"><MeterIcon play /></ToolButton>
              <ToolButton aria-label="Tuner"><ForkIcon /></ToolButton>
              <ToolButton aria-label="Sync"><SyncIcon /></ToolButton>
            </ToolGroup>
            <ToolGroup $end>
              <ToolButton aria-label="Songtree"><TreeIcon /></ToolButton>
              <ToolButton aria-label="Share"><FaShareAlt size={16} color="#17b4ee" /></ToolButton>
              <PlainButton $left={22} aria-label="Settings"><FaCog size={13} /></PlainButton>
            </ToolGroup>
          </Toolbar>
          <Workspace>
            <InputPanel>
              <ButtonRow>
                <SmallButton $active aria-label="Record input"><svg width="12" height="12" fill="currentColor"><circle cx="6" cy="6" r="5.800" /></svg></SmallButton>
                <SmallButton aria-label="List"><svg width="12" height="12" fill="currentColor"><path d="M0 0h12v2H0zM0 5h12v2H0zM0 10h12v2H0z" /></svg></SmallButton>
                <SmallButton aria-label="More"><svg width="12" height="3" fill="currentColor"><path d="M0 0h3v3H0zM4.500 0h3v3h-3zM9 0h3v3H9z" /></svg></SmallButton>
              </ButtonRow>
              <DeviceName>WasAPI: Microphone (...</DeviceName>
              <Meter>
                <MeterValues><span>-74.7</span><span>-74.7</span></MeterValues>
                <MeterTicks>{Array.from({ length: 10 }, (_, i) => <MeterTick key={i} />)}</MeterTicks>
                <PeakLabel>Peak</PeakLabel>
              </Meter>
              <PeakRow>
                <PeakButton>Пик</PeakButton>
                <PeakGear aria-label="Peak settings"><MdSettings size={12} /></PeakGear>
              </PeakRow>
            </InputPanel>
            <ChannelColumn>
              <ChannelHeader>Мастер</ChannelHeader>
              <SpeakerButton aria-label="Output"><SpeakerIcon /></SpeakerButton>
              <LevelBar />
              <ChannelFoot><FaderTip />Aux 1</ChannelFoot>
            </ChannelColumn>
            <TrackPanel>
              <TrackTools>
                <TrackButton $w={33} aria-label="Track menu"><ListDownIcon /></TrackButton>
                <PlainButton $left={17} aria-label="Envelope"><EnvelopeIcon /></PlainButton>
                <PlainButton $left={19} aria-label="Track settings"><FaCog size={13} /></PlainButton>
                <Grow />
                <TrackButton $w={28} aria-label="Add track"><FaPlusCircle size={14} /></TrackButton>
              </TrackTools>
              <DropZone><Plus size={13} w={1} /></DropZone>
            </TrackPanel>
            <Timeline>
              <TimelineBody>
                <Arrange>
                  <Ruler>
                    {marks.map((m, i) => <RulerMark key={m} $first={i === 0}>{m}</RulerMark>)}
                    <PlayheadFlag />
                  </Ruler>
                  <Logo>
                    <LogoName>n-Track</LogoName>
                    <LogoSub>STUDIO</LogoSub>
                  </Logo>
                </Arrange>
                <VStrip>
                  <FitIcon />
                  <VThumb />
                  <VZoom>
                    <ZoomButton aria-label="Zoom out vertically"><Minus /></ZoomButton>
                    <ZoomButton aria-label="Zoom in vertically"><Plus size={8} w={2} /></ZoomButton>
                  </VZoom>
                </VStrip>
              </TimelineBody>
              <HStrip>
                <HThumb />
                <ZoomButton aria-label="Zoom out"><Minus /></ZoomButton>
                <ZoomButton aria-label="Zoom in"><Plus size={8} w={2} /></ZoomButton>
                <FullButton aria-label="Zoom to fit"><ExpandIcon /></FullButton>
              </HStrip>
            </Timeline>
          </Workspace>
          <Transport>
            <TransportButtons>
              <TransportButton aria-label="Record"><svg width="18" height="18" fill="currentColor"><circle cx="9" cy="9" r="9" /></svg></TransportButton>
              <TransportButton aria-label="Play"><svg width="19" height="20" fill="currentColor"><path d="M0 0l19 10L0 20z" /></svg></TransportButton>
              <TransportButton aria-label="Rewind"><svg width="24" height="18" fill="currentColor"><path d="M13 0v18L0 9zM24 0v18L11 9z" /></svg></TransportButton>
              <TransportButton aria-label="Stop"><svg width="19" height="19" fill="currentColor"><path d="M0 0h19v19H0z" /></svg></TransportButton>
              <TransportButton aria-label="Loop"><LoopIcon /></TransportButton>
              <TransportButton aria-label="Count in">
                <CountIn>
                  <svg width="15" height="15" fill="currentColor"><circle cx="7.500" cy="7.500" r="7.500" /></svg>
                  <Digits><Digit $size={11}>1</Digit><Digit $size={13}>2</Digit><Digit $size={15}>3</Digit><Digit $size={17}>4</Digit></Digits>
                </CountIn>
              </TransportButton>
            </TransportButtons>
            <Panel>
              <Cell $w={20}><LiveButton>{'LIVE'.split('').map((c) => <span key={c}>{c}</span>)}</LiveButton></Cell>
              <Cell $w={161}><Clock>1:1:000</Clock></Cell>
              <Cell $w={70}><CellHalf>Начало</CellHalf><CellHalf>Конец</CellHalf></Cell>
              <Cell $w={69}><CellHalf $size={10}>1:1:000</CellHalf><CellHalf $size={10}>1:1:000</CellHalf></Cell>
              <Cell $w={100}><GridButton>Сетка</GridButton></Cell>
              <Cell $w={57}><CellHalf $dim $size={10}>Bpm</CellHalf><CellHalf $size={10}>120</CellHalf></Cell>
              <Stepper name="Bpm" />
              <Cell $w={57}><CellHalf $dim $size={10}>Ключ</CellHalf><CellHalf $dim $size={10}>/</CellHalf></Cell>
              <Stepper name="Key" />
              <Cell $w={71}><CellButton aria-label="Metronome"><MetronomeIcon /></CellButton></Cell>
              <Cell $w={20}><CellButton aria-label="Metronome options"><Arrow /></CellButton></Cell>
              <Cell $w={40}><CellHalf $size={10}>4</CellHalf><CellHalf $size={10}>4</CellHalf></Cell>
              <Cell $w={69}><CellButton aria-label="Tempo changes"><NoteClockIcon /></CellButton></Cell>
            </Panel>
          </Transport>
          <StatusBar>
            <span>Выбор. CTRL -&gt; Смещение</span>
            <StatusClose aria-label="Close status bar"><FaTimesCircle size={12} /></StatusClose>
          </StatusBar>
        </Main>
        <Guide>
          <GuideHeader>
            <GuideTitle>Краткое руководство</GuideTitle>
            <PlainButton aria-label="Guide help"><FaQuestionCircle size={12} /></PlainButton>
            <PlainButton aria-label="Close guide"><FaTimesCircle size={12} /></PlainButton>
          </GuideHeader>
          <GuideBody>
            <GuideCard>
              {guide.map((g) => (
                <React.Fragment key={g.title}>
                  <GuideHeading>{g.title}</GuideHeading>
                  <GuideList>
                    {g.items.map((t) => <GuideItem key={t}><GuideLink href="#">{t}</GuideLink></GuideItem>)}
                  </GuideList>
                </React.Fragment>
              ))}
            </GuideCard>
            <GuideScroll>
              <ScrollArrow $h={34} aria-label="Scroll up"><Chevron up /></ScrollArrow>
              <ScrollThumb />
              <ScrollRest />
              <ScrollArrow $h={48} aria-label="Scroll down"><Chevron /></ScrollArrow>
            </GuideScroll>
          </GuideBody>
        </Guide>
      </Columns>
      <Mixer />
      <Preferences />
    </Window>
  );
}
